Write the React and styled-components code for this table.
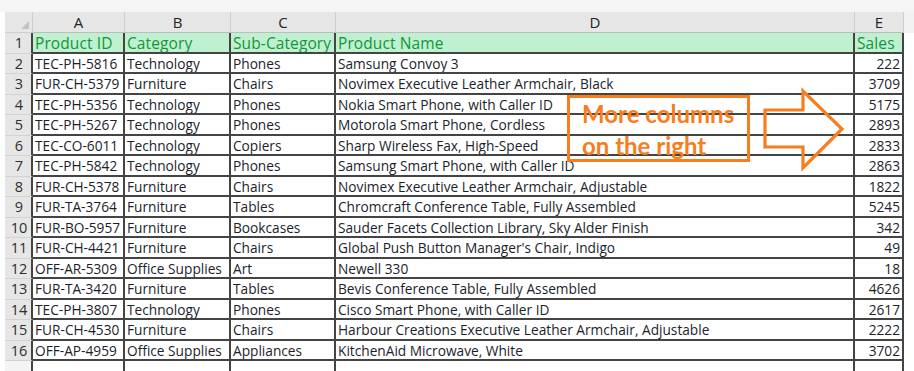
import React from "react";
import styled, { createGlobalStyle } from "styled-components";

const GlobalStyle = createGlobalStyle`
  html, body { margin: 0; padding: 0; background: #ffffff; }
  body { font-family: "Open Sans", "Noto Sans", sans-serif; }
  * { box-sizing: border-box; }
`;

const COLS = "28px 92px 106px 105px 519px 49px 1fr";
const LINE = "#444444";
const ORANGE = "#f77d1e";

const Page = styled.div`
  width: 914px;
  height: 371px;
  overflow: hidden;
  background: #ffffff;
  padding-left: 5px;
`;

const Sheet = styled.div`
  position: relative;
  display: flex;
  flex-direction: column;
`;

const TopStrip = styled.div`
  height: 12px;
  background: #f5f5f5;
  margin-left: -5px;
`;

const Row = styled.div`
  display: grid;
  grid-template-columns: ${COLS};
  height: ${(p) => p.$h || "20.5px"};
`;

const Corner = styled.div`
  position: relative;
  background: #e6e6e6;
  border-right: 1px solid #cfcfcf;
  border-bottom: 1px solid #cfcfcf;
  &::after {
    content: "";
    position: absolute;
    right: 3px;
    bottom: 3px;
    width: 0;
    height: 0;
    border-left: 8px solid transparent;
    border-bottom: 8px solid #c4c4c4;
  }
`;

const ColHead = styled.div`
  background: #e6e6e6;
  border-right: 1px solid #cdcdcd;
  border-bottom: 1px solid #bdbdbd;
  display: flex;
  align-items: center;
  justify-content: center;
  font-size: 15px;
  font-weight: 500;
  color: #222222;
`;

const Filler = styled.div`
  background: ${(p) => p.$bg || "#ffffff"};
`;

const RowNum = styled.div`
  background: ${(p) => (p.$blank ? "#f4f4f4" : "#e6e6e6")};
  border-right: 2px solid ${LINE};
  border-bottom: 1px solid #d2d2d2;
  display: flex;
  align-items: center;
  justify-content: center;
  font-size: 14.5px;
  font-weight: 500;
  color: #2e2e2e;
  padding-left: 2px;
`;

const Cell = styled.div`
  background: ${(p) => (p.$head ? "#bff0d0" : "#ffffff")};
  color: ${(p) => (p.$head ? "#13963a" : "#201e2c")};
  border-right: 2px solid ${LINE};
  border-bottom: ${(p) => (p.$noBottom ? "none" : `2px solid ${LINE}`)};
  font-size: ${(p) => (p.$head ? "15.5px" : "13.7px")};
  font-weight: 500;
  letter-spacing: ${(p) => (p.$head ? "0.1px" : "0")};
  display: flex;
  align-items: center;
  justify-content: ${(p) => (p.$num ? "flex-end" : "flex-start")};
  padding: ${(p) => (p.$num ? "1px 2px 0 0" : "1px 0 0 2px")};
  white-space: nowrap;
  overflow: hidden;
`;

const Callout = styled.div`
  position: absolute;
  left: 562px;
  top: 83px;
  width: 183px;
  height: 67px;
  border: 3px solid ${ORANGE};
  padding: 0 0 0 12px;
  color: ${ORANGE};
  font-family: "Lato", sans-serif;
  font-weight: 700;
  font-size: 24px;
  line-height: 32px;
  white-space: nowrap;
`;

const ArrowSvg = styled.svg`
  position: absolute;
  left: 755px;
  top: 74px;
  overflow: visible;
`;

const data = [
  ["TEC-PH-5816", "Technology", "Phones", "Samsung Convoy 3", "222"],
  ["FUR-CH-5379", "Furniture", "Chairs", "Novimex Executive Leather Armchair, Black", "3709"],
  ["TEC-PH-5356", "Technology", "Phones", "Nokia Smart Phone, with Caller ID", "5175"],
  ["TEC-PH-5267", "Technology", "Phones", "Motorola Smart Phone, Cordless", "2893"],
  ["TEC-CO-6011", "Technology", "Copiers", "Sharp Wireless Fax, High-Speed", "2833"],
  ["TEC-PH-5842", "Technology", "Phones", "Samsung Smart Phone, with Caller ID", "2863"],
  ["FUR-CH-5378", "Furniture", "Chairs", "Novimex Executive Leather Armchair, Adjustable", "1822"],
  ["FUR-TA-3764", "Furniture", "Tables", "Chromcraft Conference Table, Fully Assembled", "5245"],
  ["FUR-BO-5957", "Furniture", "Bookcases", "Sauder Facets Collection Library, Sky Alder Finish", "342"],
  ["FUR-CH-4421", "Furniture", "Chairs", "Global Push Button Manager's Chair, Indigo", "49"],
  ["OFF-AR-5309", "Office Supplies", "Art", "Newell 330", "18"],
  ["FUR-TA-3420", "Furniture", "Tables", "Bevis Conference Table, Fully Assembled", "4626"],
  ["TEC-PH-3807", "Technology", "Phones", "Cisco Smart Phone, with Caller ID", "2617"],
  ["FUR-CH-4530", "Furniture", "Chairs", "Harbour Creations Executive Leather Armchair, Adjustable", "2222"],
  ["OFF-AP-4959", "Office Supplies", "Appliances", "KitchenAid Microwave, White", "3702"],
];

export default function App() {
  return (
    <>
      <GlobalStyle />
      <Page>
        <TopStrip />
        <Sheet>
          <Row $h="21px">
            <Corner />
            {["A", "B", "C", "D", "E"].map((l) => (
              <ColHead key={l}>{l}</ColHead>
            ))}
            <Filler $bg="#f2f2f2" />
          </Row>
          <Row>
            <RowNum>1</RowNum>
            <Cell $head>Product ID</Cell>
            <Cell $head>Category</Cell>
            <Cell $head>Sub-Category</Cell>
            <Cell $head>Product Name</Cell>
            <Cell $head>Sales</Cell>
            <Filler />
          </Row>
          {data.map((r, i) => (
            <Row key={i}>
              <RowNum>{i + 2}</RowNum>
              <Cell>{r[0]}</Cell>
              <Cell>{r[1]}</Cell>
              <Cell>{r[2]}</Cell>
              <Cell>{r[3]}</Cell>
              <Cell $num>{r[4]}</Cell>
              <Filler />
            </Row>
          ))}
          <Row $h="12px">
            <RowNum $blank />
            <Cell $noBottom />
            <Cell $noBottom />
            <Cell $noBottom />
            <Cell $noBottom />
            <Cell $noBottom />
            <Filler />
          </Row>

          <Callout>
            More columns
            <br />
            on the right
          </Callout>
          <ArrowSvg width="90" height="90" viewBox="755 86 90 90">
            <polygon
              points="760,110 798,110 798,91 837,129 798,168 798,147 760,147"
              fill="none"
              stroke={ORANGE}
              strokeWidth="3.2"
              strokeLinejoin="miter"
            />
          </ArrowSvg>
        </Sheet>
      </Page>
    </>
  );
}
